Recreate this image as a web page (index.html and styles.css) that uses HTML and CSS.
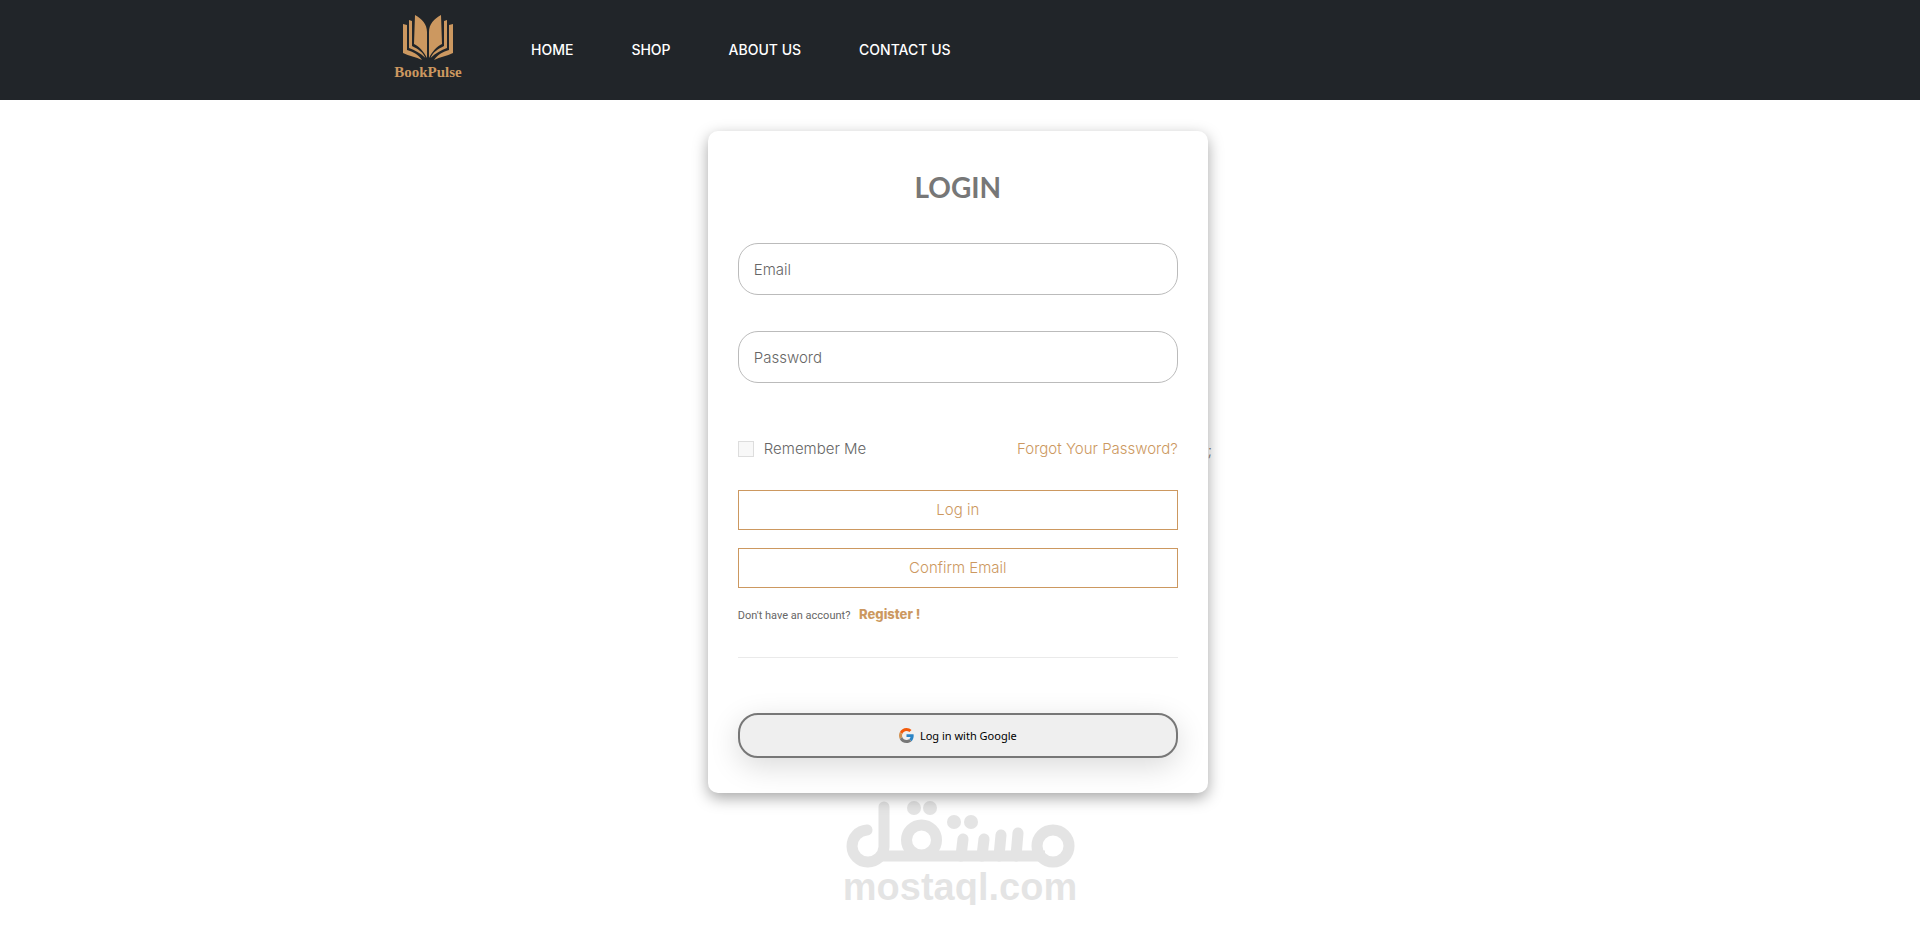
FILE: index.html
```html
<!DOCTYPE html>
<html lang="en">

<head>
  <meta charset="UTF-8">
  <meta name="viewport" content="width=device-width, initial-scale=1">
  <title>BookPulse - Login</title>
  <link rel="stylesheet" href="styles.css">
</head>

<body>
  <!-- Header -->
  <header class="header">
    <div class="header-inner">
      <a href="#" class="brand">
        <svg class="brand-icon" viewBox="0 0 52 46" aria-hidden="true">
          <g id="page-half">
            <path d="M13 0 C20 4 25 9 25 17 V43 C22 37 17 31 12 29 Z" />
            <path d="M7 5 L10 6 V31 C16 34 21 37 23.500 43 C18 38 13 35 7 33 Z" />
            <path d="M1 9 L5 10 V35 C11 37 16 39 20 45 C14 42 7 41 1 38 Z" />
          </g>
          <use href="#page-half" transform="translate(52 0) scale(-1 1)" />
        </svg>
        <span class="brand-name">BookPulse</span>
      </a>
      <nav class="nav">
        <a href="#">HOME</a>
        <a href="#">SHOP</a>
        <a href="#">ABOUT US</a>
        <a href="#">CONTACT US</a>
      </nav>
    </div>
  </header>

  <!-- Login -->
  <main class="login-area">
    <form class="card">
      <h1>LOGIN</h1>
      <input class="field" type="email" placeholder="Email" aria-label="Email">
      <input class="field" type="password" placeholder="Password" aria-label="Password">

      <div class="options">
        <label class="remember" for="remember">
          <input type="checkbox" id="remember">
          Remember Me
        </label>
        <a href="#">Forgot Your Password?</a>
      </div>

      <button type="submit" class="btn">Log in</button>
      <button type="button" class="btn">Confirm Email</button>

      <p class="register">Don't have an account? <a href="#">Register !</a></p>
      <hr>

      <button type="button" class="btn-google">
        <svg class="google-icon" viewBox="0 0 48 48" aria-hidden="true">
          <path fill="#f25a0a" d="M24 9.500c3.500 0 6.700 1.200 9.200 3.600l6.900-6.900C35.900 2.400 30.500 0 24 0 14.600 0 6.500 5.400 2.600 13.200l8 6.200C12.400 13.700 17.700 9.500 24 9.500z" />
          <path fill="#2a84c6" d="M47 24.600c0-1.600-.2-3.100-.4-4.600H24v9h12.900c-.6 3-2.200 5.500-4.700 7.200l7.700 6C44.400 38 47 31.800 47 24.600z" />
          <path fill="#d09050" d="M10.500 28.600c-.5-1.500-.8-3-.8-4.600s.3-3.100.8-4.600l-8-6.200C.9 16.500 0 20.100 0 24s.9 7.500 2.600 10.800z" />
          <path fill="#777" d="M24 48c6.500 0 11.900-2.100 15.900-5.800l-7.700-6c-2.200 1.500-4.900 2.300-8.200 2.300-6.300 0-11.600-4.200-13.500-9.900l-8 6.200C6.500 42.600 14.600 48 24 48z" />
        </svg>
        Log in with Google
      </button>
    </form>
    ;
  </main>

  <!-- Watermark -->
  <footer class="watermark">
    <svg class="watermark-logo" viewBox="0 0 230 68" role="img" aria-label="مستقل">
      <g fill="none" stroke="#000" stroke-width="11" stroke-linecap="round">
        <path d="M22 29 A16 16 0 1 0 39 46 V6" />
        <path d="M36 55 H200" stroke-linecap="butt" />
        <circle cx="76.500" cy="39" r="15" />
        <path d="M116 55 L118 38" />
        <path d="M137 55 L139 38" />
        <path d="M154 55 L156 34" />
        <path d="M171 55 L173 32" />
        <circle cx="208" cy="45" r="16" />
      </g>
      <g fill="#000">
        <circle cx="69" cy="7" r="7" />
        <circle cx="85" cy="7" r="7" />
        <circle cx="109" cy="21" r="7" />
        <circle cx="126" cy="21" r="7" />
      </g>
    </svg>
    <span>mostaql.com</span>
  </footer>
</body>

</html>
```
FILE: styles.css
```css
* {
  box-sizing: border-box;
}

body {
  margin: 0;
  font-family: Inter, sans-serif;
  font-size: 15px;
  font-weight: 300;
  line-height: 24px;
  color: #666;
  background: #fff;
}

a {
  color: #cc9860;
  text-decoration: none;
}

/* header */
.header {
  background: #212529;
}

.header-inner {
  display: flex;
  align-items: center;
  gap: 36px;
  max-width: 1140px;
  min-height: 100px;
  margin: 0 auto;
}

.brand {
  display: flex;
  flex-direction: column;
  align-items: center;
  width: 76px;
  margin-bottom: 2px;
}

.brand-icon {
  width: 52px;
  height: 46px;
  fill: #cc9860;
}

.brand-name {
  font-family: "Liberation Serif", serif;
  font-size: 15px;
  font-weight: 700;
  line-height: 22px;
}

.nav {
  display: flex;
  flex-wrap: wrap;
}

.nav a {
  padding: 0 29px;
  font-size: 14px;
  font-weight: 500;
  color: #fff;
}

/* login card */
.login-area {
  display: flex;
  justify-content: center;
  align-items: center;
}

.card {
  display: flex;
  flex-direction: column;
  width: 100%;
  max-width: 500px;
  margin: 31px 0 8px;
  padding: 36px 30px 35px;
  border-radius: 10px;
  background: #fff;
  box-shadow: 0 5px 15px rgba(0, 0, 0, 0.35);
}

h1 {
  margin: 0 0 36px;
  font-family: Lato, sans-serif;
  font-size: 28px;
  font-weight: 700;
  line-height: 40px;
  text-align: center;
  color: #777;
}

.field {
  width: 100%;
  height: 52px;
  margin-bottom: 36px;
  padding: 0 15px;
  border: 1px solid #bbb;
  border-radius: 20px;
  font: inherit;
  color: #666;
  background: #fff;
}

.field::placeholder {
  color: #666;
}

.options {
  display: flex;
  justify-content: space-between;
  margin: 18px 0 29px;
}

.remember {
  display: flex;
  align-items: center;
  gap: 10px;
}

.remember input {
  appearance: none;
  width: 16px;
  height: 16px;
  margin: 0;
  border: 1px solid #ddd;
  background: #f8f8f8;
}

.remember input:checked {
  background: #cc9860;
}

.btn {
  height: 40px;
  margin-bottom: 18px;
  border: 1px solid #cc9860;
  font: inherit;
  color: #cc9860;
  background: #fff;
  cursor: pointer;
}

.register {
  margin: -4px 0 29px;
  font-family: Roboto, sans-serif;
  font-size: 11px;
  font-weight: 400;
}

.register a {
  margin-left: 6px;
  font-family: Inter, sans-serif;
  font-size: 13px;
  font-weight: 800;
}

hr {
  width: 100%;
  margin: 0 0 55px;
  border: 0;
  border-top: 1px solid #eaeaea;
}

.btn-google {
  display: flex;
  justify-content: center;
  align-items: center;
  gap: 6px;
  height: 45px;
  border: 2px solid #777;
  border-radius: 20px;
  font-family: "Noto Sans", sans-serif;
  font-size: 11px;
  color: #000;
  background: #efefef;
  box-shadow: 0 8px 30px rgba(0, 0, 0, 0.15);
  cursor: pointer;
}

.google-icon {
  width: 15px;
  height: 15px;
}

/* watermark */
.watermark {
  display: flex;
  flex-direction: column;
  align-items: center;
  font-family: "Liberation Sans", sans-serif;
  font-size: 38px;
  font-weight: 700;
  line-height: 36px;
  color: #000;
  opacity: 0.1;
}

.watermark-logo {
  width: 230px;
  height: 68px;
  overflow: visible;
}
```
